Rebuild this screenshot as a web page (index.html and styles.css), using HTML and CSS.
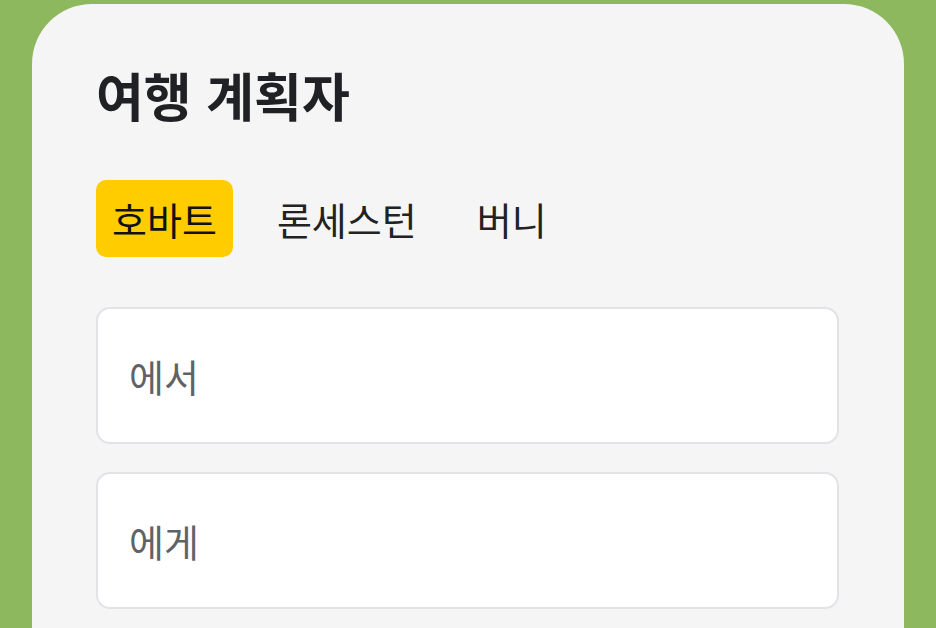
FILE: index.html
```html
<!DOCTYPE html>
<html lang="ko">
<head>
  <meta charset="UTF-8" />
  <meta name="viewport" content="width=device-width, initial-scale=1.0"/>
  <title>여행 계획자</title>
  <link rel="stylesheet" href="styles.css">
</head>
<body>

  <div class="planner">
    <h1>여행 계획자</h1>

    <div class="tabs">
      <button class="tab active">호바트</button>
      <button class="tab">론세스턴</button>
      <button class="tab">버니</button>
    </div>

    <div class="fields">
      <input type="text" placeholder="에서">
      <input type="text" placeholder="에게">
    </div>
  </div>

</body>
</html>
```

FILE: styles.css
```css
* {
  box-sizing: border-box;
  font-family: 'Noto Sans CJK KR', 'Noto Sans', sans-serif;
  margin: 0;
  padding: 0;
}

body {
  background: #8db85d;
  padding: 4px 32px 0;
  height: 100vh;
  overflow: hidden;
}

.planner {
  background: #f5f5f5;
  border-radius: 60px 60px 0 0;
  padding: 60px 65px 40px 64px;
  min-height: 700px;
}

h1 {
  color: #202124;
  font-size: 52px;
  font-weight: 700;
  line-height: 1.2;
  margin-bottom: 54px;
}

.tabs {
  display: flex;
  gap: 28px;
  margin-bottom: 50px;
}

.tab {
  background: none;
  border: none;
  border-radius: 10px;
  color: #222;
  cursor: pointer;
  font-size: 38px;
  font-weight: 400;
  line-height: 45px;
  padding: 16px 16px;
}

.tab.active {
  background: #ffcc00;
  color: #111;
}

.fields {
  display: flex;
  flex-direction: column;
  gap: 28px;
}

input {
  background: white;
  border: 2px solid #e1e3e7;
  border-radius: 14px;
  color: #202124;
  font-size: 38px;
  line-height: 49px;
  padding: 42px 31px;
  width: 100%;
}

input::placeholder {
  color: #5f6368;
}
```
